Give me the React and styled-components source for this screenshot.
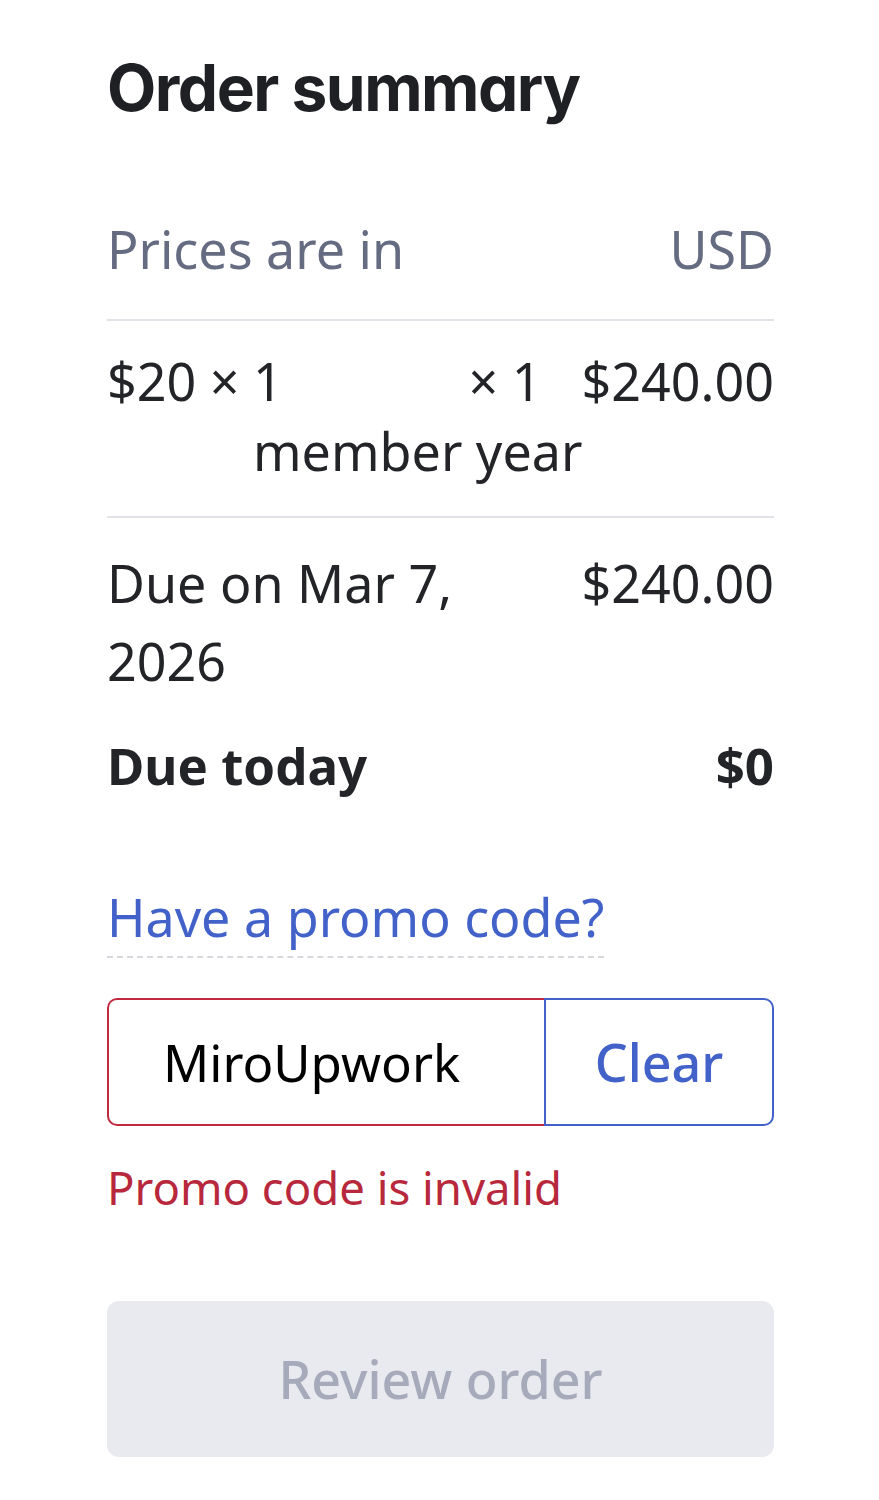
import React from "react";
import styled, { createGlobalStyle } from "styled-components";

const GlobalStyle = createGlobalStyle`
  body {
    margin: 0;
    background: #ffffff;
    font-family: "Noto Sans", "Open Sans", sans-serif;
    color: #222428;
  }
`;

const Wrapper = styled.div`
  width: 667px;
  padding: 50px 0 40px 107px;
  display: flex;
  flex-direction: column;
`;

const Title = styled.h1`
  margin: 0 0 83px;
  font-family: Inter, "Noto Sans", sans-serif;
  font-feature-settings: "cv11" 1;
  font-size: 64px;
  font-weight: 700;
  letter-spacing: -1.5px;
  line-height: 1.2;
  color: #1f2024;
`;

const Row = styled.div`
  display: flex;
  justify-content: space-between;
  align-items: flex-start;
  gap: 40px;
  font-size: ${props => (props.bold ? "51px" : "52px")};
  font-weight: ${props => (props.bold ? 700 : 400)};
  line-height: 78px;
  color: ${props => (props.muted ? "#656b81" : "#222428")};
  padding: ${props => props.pad || "0"};
  border-bottom: ${props => (props.divider ? "2px solid #e2e3e8" : "none")};
`;

const Cell = styled.div`
  flex: ${props => (props.grow ? 1 : "none")};
  white-space: ${props => (props.grow ? "normal" : "nowrap")};
`;

const ItemDesc = styled.div`
  flex: 1;
  min-width: 0;
  display: flex;
  flex-direction: column;
`;

const DescLine = styled.div`
  display: flex;
  justify-content: space-between;
`;

const DescSub = styled.div`
  padding-left: 146px;
  margin-top: -8px;
  white-space: nowrap;
`;

const PromoLink = styled.a`
  align-self: flex-start;
  margin-top: 77px;
  padding-bottom: 3px;
  font-size: 52px;
  line-height: 72px;
  color: #4262c9;
  text-decoration: none;
  border-bottom: 2px dashed #d6d8de;
  cursor: pointer;
`;

const PromoGroup = styled.div`
  margin-top: 40px;
  display: flex;
  height: 128px;
`;

const PromoInput = styled.input`
  flex: 1;
  min-width: 0;
  box-sizing: border-box;
  height: 100%;
  padding: 0 0 0 54px;
  border: 2px solid #c0293f;
  border-right: none;
  border-radius: 10px 0 0 10px;
  font-family: "Noto Sans", sans-serif;
  font-size: 51px;
  color: #000;
  outline: none;
`;

const ClearButton = styled.button`
  width: 230px;
  box-sizing: border-box;
  height: 100%;
  border: 2px solid #4262c9;
  border-radius: 0 10px 10px 0;
  background: #fff;
  font-family: "Noto Sans", sans-serif;
  font-size: 52px;
  font-weight: 500;
  color: #4262c9;
  cursor: pointer;
`;

const ErrorText = styled.div`
  margin-top: 22px;
  font-size: 45.5px;
  line-height: 78px;
  color: #b8283c;
`;

const ReviewButton = styled.button`
  margin-top: 75px;
  height: 156px;
  border: none;
  border-radius: 12px;
  background: #e9eaef;
  font-family: "Noto Sans", sans-serif;
  font-size: 52px;
  font-weight: 500;
  color: #a7aabb;
`;

export default function App() {
  return (
    <>
      <GlobalStyle />
      <Wrapper>
        <Title>Order summary</Title>
        <Row muted divider pad="0 0 31px">
          <Cell>Prices are in</Cell>
          <Cell>USD</Cell>
        </Row>
        <Row divider pad="21px 0 26px">
          <ItemDesc>
            <DescLine>
              <span>$20 × 1</span>
              <span>× 1</span>
            </DescLine>
            <DescSub>member year</DescSub>
          </ItemDesc>
          <Cell>$240.00</Cell>
        </Row>
        <Row pad="26px 0 0">
          <Cell grow>Due on Mar 7, 2026</Cell>
          <Cell>$240.00</Cell>
        </Row>
        <Row bold pad="26px 0 0">
          <Cell>Due today</Cell>
          <Cell>$0</Cell>
        </Row>
        <PromoLink>Have a promo code?</PromoLink>
        <PromoGroup>
          <PromoInput defaultValue="MiroUpwork" />
          <ClearButton>Clear</ClearButton>
        </PromoGroup>
        <ErrorText>Promo code is invalid</ErrorText>
        <ReviewButton disabled>Review order</ReviewButton>
      </Wrapper>
    </>
  );
}
